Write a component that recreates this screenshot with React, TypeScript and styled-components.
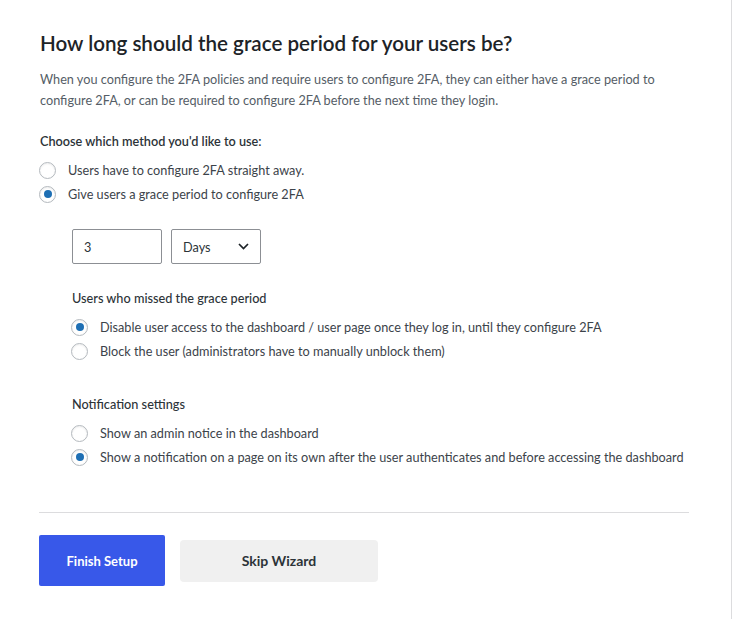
import React, { useState } from 'react'
import styled, { createGlobalStyle } from 'styled-components'

const GlobalStyle = createGlobalStyle`
  html, body {
    margin: 0;
    padding: 0;
    background: #fff;
  }
  body {
    font-family: Lato, "Noto Sans", Arial, sans-serif;
    -webkit-font-smoothing: antialiased;
  }
`

const Page = styled.div`
  width: 732px;
  min-height: 100vh;
  box-sizing: border-box;
  border-right: 1px solid #dcdcde;
  background: #fff;
  padding: 30px 43px 30px 39px;
`

const Title = styled.h2`
  margin: 0;
  font-size: 20.6px;
  line-height: 26px;
  font-weight: 600;
  color: #1d2327;
  padding-left: 1px;
`

const Intro = styled.p`
  margin: 13px 0 0;
  font-size: 12.7px;
  line-height: 21px;
  color: #555d66;
  padding-left: 1px;
`

const GroupLabel = styled.div<{ $indent?: boolean; $top: number }>`
  margin-top: ${p => p.$top}px;
  margin-left: ${p => (p.$indent ? 32 : 0)}px;
  font-size: 12.7px;
  line-height: 20px;
  font-weight: ${p => (p.$indent ? 500 : 600)};
  color: #2c3338;
  padding-left: 1px;
`

const RadioList = styled.div<{ $indent?: boolean }>`
  display: flex;
  flex-direction: column;
  margin-top: 7px;
  margin-left: ${p => (p.$indent ? 32 : 0)}px;
`

const RadioRow = styled.label`
  display: flex;
  align-items: center;
  gap: 12px;
  height: 24px;
  font-size: 12.7px;
  color: #3c434a;
  white-space: nowrap;
  cursor: pointer;
`

const RadioDot = styled.span<{ $checked: boolean }>`
  flex: none;
  width: 17px;
  height: 17px;
  box-sizing: border-box;
  border-radius: 50%;
  border: 1px solid #b4b9be;
  background: #fff;
  box-shadow: inset 0 1px 2px rgba(0, 0, 0, 0.08);
  display: flex;
  align-items: center;
  justify-content: center;

  &::after {
    content: '';
    width: 8px;
    height: 8px;
    border-radius: 50%;
    background: #1e6fb4;
    display: ${p => (p.$checked ? 'block' : 'none')};
  }
`

const PeriodRow = styled.div`
  display: flex;
  gap: 9px;
  margin: 23px 0 0 33px;
`

const Field = styled.div`
  width: 90px;
  height: 35px;
  box-sizing: border-box;
  border: 1px solid #8c8f94;
  border-radius: 2px;
  display: flex;
  align-items: center;
  justify-content: space-between;
  padding: 0 11px;
  font-size: 12.7px;
  color: #2c3338;
  background: #fff;
`

const Divider = styled.hr`
  margin: 43px 0 0;
  border: none;
  border-top: 1px solid #dcdcde;
  width: 650px;
`

const Actions = styled.div`
  display: flex;
  align-items: center;
  gap: 15px;
  margin-top: 22px;
`

const Button = styled.button<{ $primary?: boolean }>`
  font-family: inherit;
  border: none;
  cursor: pointer;
  font-weight: 700;
  font-size: ${p => (p.$primary ? 13 : 14)}px;
  width: ${p => (p.$primary ? 126 : 198)}px;
  height: ${p => (p.$primary ? 51 : 42)}px;
  border-radius: ${p => (p.$primary ? 2 : 4)}px;
  background: ${p => (p.$primary ? '#3858e9' : '#f0f0f0')};
  color: ${p => (p.$primary ? '#fff' : '#2c3338')};
`

const Chevron = () => (
  <svg width="11" height="7" viewBox="0 0 11 7" fill="none">
    <path d="M1 1l4.5 4.5L10 1" stroke="#1d2327" strokeWidth="1.7" />
  </svg>
)

type Option = { id: string; label: string }

function RadioGroup({
  options,
  value,
  onChange,
  indent,
}: {
  options: Option[]
  value: string
  onChange: (v: string) => void
  indent?: boolean
}) {
  return (
    <RadioList $indent={indent}>
      {options.map(o => (
        <RadioRow key={o.id} onClick={() => onChange(o.id)}>
          <RadioDot $checked={value === o.id} />
          {o.label}
        </RadioRow>
      ))}
    </RadioList>
  )
}

export default function App() {
  const [method, setMethod] = useState('grace')
  const [missed, setMissed] = useState('disable')
  const [notify, setNotify] = useState('page')

  return (
    <>
      <GlobalStyle />
      <Page>
        <Title>How long should the grace period for your users be?</Title>
        <Intro>
          When you configure the 2FA policies and require users to configure 2FA, they can either have a grace
          period to configure 2FA, or can be required to configure 2FA before the next time they login.
        </Intro>

        <GroupLabel $top={20}>Choose which method you'd like to use:</GroupLabel>
        <RadioGroup
          value={method}
          onChange={setMethod}
          options={[
            { id: 'now', label: 'Users have to configure 2FA straight away.' },
            { id: 'grace', label: 'Give users a grace period to configure 2FA' },
          ]}
        />

        <PeriodRow>
          <Field>3</Field>
          <Field>
            Days
            <Chevron />
          </Field>
        </PeriodRow>

        <GroupLabel $indent $top={24}>Users who missed the grace period</GroupLabel>
        <RadioGroup
          indent
          value={missed}
          onChange={setMissed}
          options={[
            {
              id: 'disable',
              label: 'Disable user access to the dashboard / user page once they log in, until they configure 2FA',
            },
            { id: 'block', label: 'Block the user (administrators have to manually unblock them)' },
          ]}
        />

        <GroupLabel $indent $top={31}>Notification settings</GroupLabel>
        <RadioGroup
          indent
          value={notify}
          onChange={setNotify}
          options={[
            { id: 'admin', label: 'Show an admin notice in the dashboard' },
            {
              id: 'page',
              label:
                'Show a notification on a page on its own after the user authenticates and before accessing the dashboard',
            },
          ]}
        />

        <Divider />

        <Actions>
          <Button $primary>Finish Setup</Button>
          <Button>Skip Wizard</Button>
        </Actions>
      </Page>
    </>
  )
}
